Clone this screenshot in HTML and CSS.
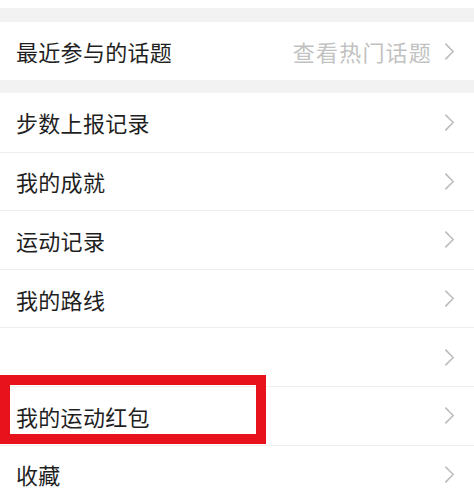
FILE: index.html
```html
<!DOCTYPE html>
<html lang="zh">
<head>
<meta charset="utf-8">
<link rel="stylesheet" href="styles.css">
</head>
<body>
<div class="page">
  <div class="top-strip"></div>
  <div class="gap gap-a"></div>
  <div class="row topic">
    <span class="label">最近参与的话题</span>
    <span class="right"><span class="hint">查看热门话题</span><svg class="chev" viewBox="0 0 12 20"><path d="M2 2 L10 10 L2 18" /></svg></span>
  </div>
  <div class="gap gap-b"></div>
  <div class="list">
    <div class="row item"><span class="label">步数上报记录</span><svg class="chev" viewBox="0 0 12 20"><path d="M2 2 L10 10 L2 18" /></svg></div>
    <div class="row item"><span class="label">我的成就</span><svg class="chev" viewBox="0 0 12 20"><path d="M2 2 L10 10 L2 18" /></svg></div>
    <div class="row item"><span class="label">运动记录</span><svg class="chev" viewBox="0 0 12 20"><path d="M2 2 L10 10 L2 18" /></svg></div>
    <div class="row item"><span class="label">我的路线</span><svg class="chev" viewBox="0 0 12 20"><path d="M2 2 L10 10 L2 18" /></svg></div>
    <div class="row item"><span class="label"></span><svg class="chev" viewBox="0 0 12 20"><path d="M2 2 L10 10 L2 18" /></svg></div>
    <div class="row item highlighted"><span class="label">我的运动红包</span><svg class="chev" viewBox="0 0 12 20"><path d="M2 2 L10 10 L2 18" /></svg><div class="mark"></div></div>
    <div class="row item"><span class="label">收藏</span><svg class="chev" viewBox="0 0 12 20"><path d="M2 2 L10 10 L2 18" /></svg></div>
  </div>
</div>
</body>
</html>
```

FILE: styles.css
```css
html, body {
  margin: 0;
  padding: 0;
  background: #ffffff;
}
.page {
  width: 474px;
  height: 504px;
  overflow: hidden;
  font-family: "Noto Sans CJK SC", "Noto Sans", sans-serif;
  color: #1f1f1f;
}
.top-strip {
  height: 8px;
  background: #ffffff;
}
.gap {
  background: #f2f2f2;
}
.gap-a { height: 14px; }
.gap-b { height: 13px; }
.row {
  display: flex;
  align-items: center;
  justify-content: space-between;
  padding: 0 19px 0 16px;
  background: #ffffff;
  box-sizing: border-box;
}
.topic {
  height: 58px;
}
.label {
  font-size: 22px;
  line-height: 1;
  letter-spacing: 0.3px;
}
.right {
  display: flex;
  align-items: center;
  gap: 12px;
}
.hint {
  font-size: 22px;
  line-height: 1;
  letter-spacing: 1.2px;
  color: #c2c2c2;
}
.chev {
  width: 11px;
  height: 19px;
  flex: none;
}
.chev path {
  fill: none;
  stroke: #bdbdbd;
  stroke-width: 1.8;
  stroke-linecap: round;
  stroke-linejoin: round;
}
.item {
  height: 58.6px;
  border-top: 1px solid #efefef;
  position: relative;
}
.item:first-child {
  border-top: none;
}
.mark {
  position: absolute;
  left: 0;
  top: -12px;
  width: 266px;
  height: 69px;
  border: 10px solid #e8121c;
  box-sizing: border-box;
}
```
